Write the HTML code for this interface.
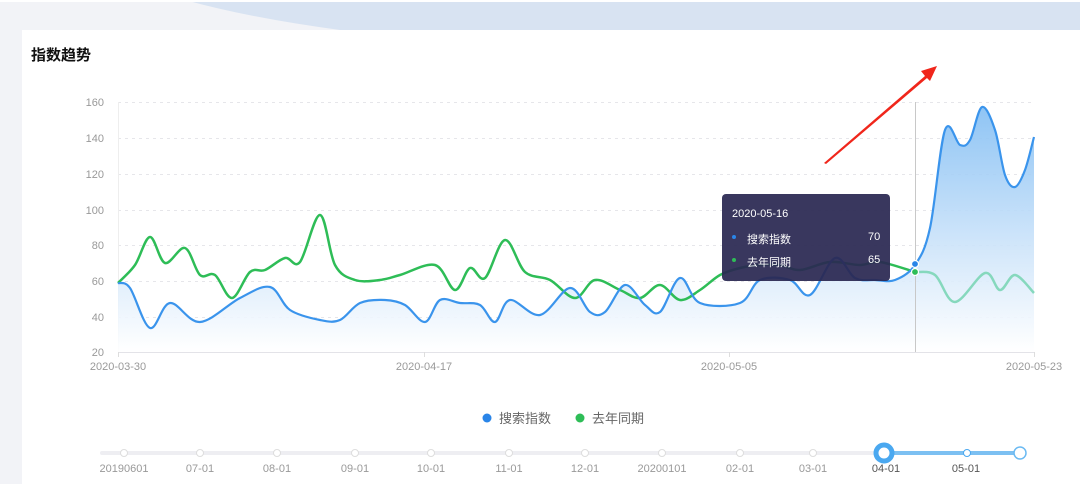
<!DOCTYPE html><html><head><meta charset="utf-8"><style>
body{margin:0;width:1080px;height:484px;overflow:hidden;background:#f2f3f7;font-family:"Liberation Sans","Noto Sans CJK SC",sans-serif;position:relative}
.card{position:absolute;left:22px;top:30px;width:1058px;height:454px;background:#fff}
.title{position:absolute;left:31px;top:44px;font-size:15px;font-weight:bold;color:#111}
svg{position:absolute;left:0;top:0}
.tip{position:absolute;left:722px;top:194px;width:168px;height:87px;background:rgba(42,40,82,0.93);border-radius:4px;color:#fff;font-size:11px}
.tip div{position:absolute}
</style></head><body>
<svg width="1080" height="30"><path d="M185,0 Q250,18 340,30 L1080,30 L1080,0 Z" fill="#d8e3f2"/><rect x="0" y="0" width="1080" height="2" fill="#fff"/></svg>
<div class="card"></div>
<div class="title">指数趋势</div>
<svg id="c" width="1080" height="484">
<defs><linearGradient id="g2" x1="0" y1="100" x2="0" y2="352" gradientUnits="userSpaceOnUse"><stop offset="0" stop-color="#7fbcf3"/><stop offset="0.6" stop-color="#cfe5fa"/><stop offset="1" stop-color="#fff"/></linearGradient></defs>
<g stroke="#e6e6ea" stroke-dasharray="3,4"><line x1="118" x2="1034" y1="102.5" y2="102.5"/><line x1="118" x2="1034" y1="138.5" y2="138.5"/><line x1="118" x2="1034" y1="174.5" y2="174.5"/><line x1="118" x2="1034" y1="210.5" y2="210.5"/><line x1="118" x2="1034" y1="245.5" y2="245.5"/><line x1="118" x2="1034" y1="281.5" y2="281.5"/><line x1="118" x2="1034" y1="317.5" y2="317.5"/></g>
<line x1="118.5" y1="102" x2="118.5" y2="352" stroke="#eee"/>
<line x1="118" y1="352.5" x2="1034" y2="352.5" stroke="#e3e3e8"/>
<g stroke="#ddd"><line x1="118.5" x2="118.5" y1="352" y2="357"/><line x1="424.5" x2="424.5" y1="352" y2="357"/><line x1="729.5" x2="729.5" y1="352" y2="357"/><line x1="1034.5" x2="1034.5" y1="352" y2="357"/></g>
<g fill="#999" font-size="11" text-anchor="end"><text x="104" y="106">160</text><text x="104" y="142">140</text><text x="104" y="178">120</text><text x="104" y="214">100</text><text x="104" y="249">80</text><text x="104" y="285">60</text><text x="104" y="321">40</text><text x="104" y="356">20</text></g>
<g fill="#999" font-size="11" text-anchor="middle"><text x="118" y="370">2020-03-30</text><text x="424" y="370">2020-04-17</text><text x="729" y="370">2020-05-05</text><text x="1034" y="370">2020-05-23</text></g>
<path id="area" fill="url(#g2)" opacity="0.9"/>
<path id="g1" fill="none" stroke="#2ebd57" stroke-width="2.5"/>
<path id="g1b" fill="none" stroke="#86d8bd" stroke-width="2.5"/>
<path id="b1" fill="none" stroke="#3a94ec" stroke-width="2.2"/>
<line x1="915.5" y1="102" x2="915.5" y2="352" stroke="#c8c8c8"/>
<circle cx="915" cy="264" r="3.5" fill="#2a85e8" stroke="#fff" stroke-width="1.2"/>
<circle cx="915" cy="272" r="3.5" fill="#2ebd57" stroke="#fff" stroke-width="1.2"/>
<polygon points="824,163 925,76 921,71 937,66 930,81 927,78 826,164" fill="#f0261b"/>
<circle cx="487" cy="418" r="4.5" fill="#2a85e8"/><text x="499" y="423" font-size="13" fill="#666">搜索指数</text>
<circle cx="580" cy="418" r="4.5" fill="#2ebd57"/><text x="592" y="423" font-size="13" fill="#666">去年同期</text>
<line x1="102" y1="453" x2="884" y2="453" stroke="#eeeef2" stroke-width="4" stroke-linecap="round"/>
<line x1="884" y1="453" x2="1020" y2="453" stroke="#7cc0f2" stroke-width="4"/>
<g fill="#fff" stroke="#ddd"><circle cx="124" cy="453" r="3.5"/><circle cx="200" cy="453" r="3.5"/><circle cx="277" cy="453" r="3.5"/><circle cx="355" cy="453" r="3.5"/><circle cx="431" cy="453" r="3.5"/><circle cx="509" cy="453" r="3.5"/><circle cx="585" cy="453" r="3.5"/><circle cx="662" cy="453" r="3.5"/><circle cx="740" cy="453" r="3.5"/><circle cx="813" cy="453" r="3.5"/></g>
<circle cx="884" cy="453" r="8" fill="#fff" stroke="#4aa8f0" stroke-width="5"/>
<circle cx="967" cy="453" r="3.5" fill="#fff" stroke="#4aa8f0"/>
<circle cx="1020" cy="453" r="6" fill="#fff" stroke="#6bbaf2" stroke-width="1.5"/>
<g fill="#999" font-size="11" text-anchor="middle"><text x="124" y="472">20190601</text><text x="200" y="472">07-01</text><text x="277" y="472">08-01</text><text x="355" y="472">09-01</text><text x="431" y="472">10-01</text><text x="509" y="472">11-01</text><text x="585" y="472">12-01</text><text x="662" y="472">20200101</text><text x="740" y="472">02-01</text><text x="813" y="472">03-01</text><text x="886" y="472" fill="#555">04-01</text><text x="966" y="472" fill="#555">05-01</text></g>
</svg>
<div class="tip"><div style="left:10px;top:14px">2020-05-16</div>
<div style="left:10px;top:41px;width:4px;height:4px;border-radius:50%;background:#2a85e8"></div><div style="left:25px;top:37px">搜索指数</div><div style="left:146px;top:37px">70</div>
<div style="left:10px;top:64px;width:4px;height:4px;border-radius:50%;background:#2ebd57"></div><div style="left:25px;top:60px">去年同期</div><div style="left:146px;top:60px">65</div></div>
<script>
function cr(p){let d="M"+p[0][0]+","+p[0][1];for(let i=0;i<p.length-1;i++){const a=p[i-1]||p[i],b=p[i],c=p[i+1],e=p[i+2]||c;d+=" C"+(b[0]+(c[0]-a[0])/6)+","+(b[1]+(c[1]-a[1])/6)+" "+(c[0]-(e[0]-b[0])/6)+","+(c[1]-(e[1]-b[1])/6)+" "+c[0]+","+c[1];}return d;}
const G=[[118,283],[135,265],[150,237],[165,263],[185,248],[200,275],[215,275],[232,298],[250,272],[265,270],[285,258],[300,262],[320,215],[335,265],[355,280],[380,280],[400,275],[435,265],[455,290],[470,268],[485,278],[505,240],[525,272],[550,280],[575,298],[595,280],[620,290],[640,298],[660,285],[680,300],[700,290],[720,275],[740,268],[760,265],[780,265],[800,270],[830,262],[860,265],[880,262],[915,272]];
const G2=[[915,272],[935,275],[955,302],[985,273],[1000,290],[1015,275],[1034,293]];
const B=[[118,283],[130,288],[150,328],[170,303],[200,322],[240,298],[270,287],[290,310],[320,320],[340,320],[360,303],[385,300],[405,305],[425,322],[440,300],[460,303],[480,305],[495,322],[510,300],[540,315],[570,288],[590,312],[605,312],[625,285],[645,305],[660,312],[680,278],[700,303],[740,303],[760,280],[790,280],[810,295],[835,258],[855,278],[875,280],[895,280],[915,265],[930,228],[945,130],[960,145],[970,140],[982,107],[995,130],[1005,175],[1015,187],[1025,170],[1034,137]];
document.getElementById('g1').setAttribute('d',cr(G));
document.getElementById('g1b').setAttribute('d',cr(G2));
const bd=cr(B);document.getElementById('b1').setAttribute('d',bd);
document.getElementById('area').setAttribute('d',bd+" L1034,352 L118,352 Z");
</script>
</body></html>
